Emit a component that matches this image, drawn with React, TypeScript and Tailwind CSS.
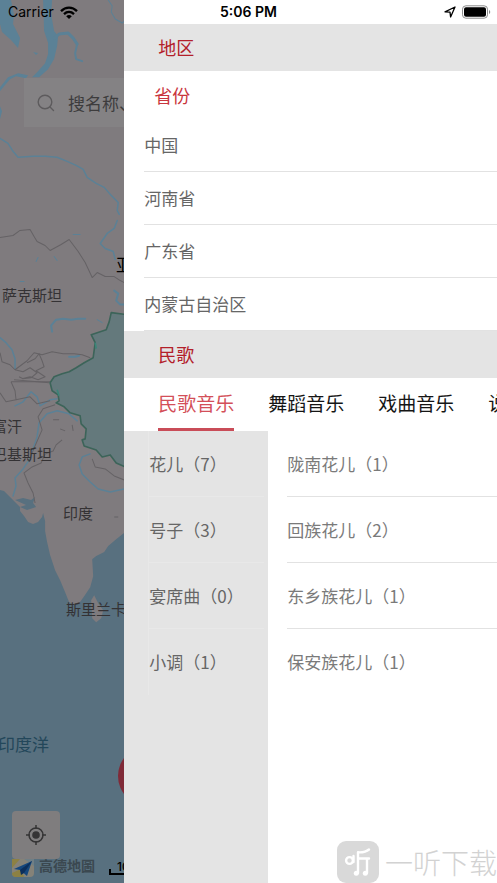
import { useState } from 'react'

const REGIONS = ['中国', '河南省', '广东省', '内蒙古自治区']

const GENRES = ['民歌音乐', '舞蹈音乐', '戏曲音乐', '说唱音乐']

const CATEGORIES = ['花儿（7）', '号子（3）', '宴席曲（0）', '小调（1）']

const SONGS = ['陇南花儿（1）', '回族花儿（2）', '东乡族花儿（1）', '保安族花儿（1）']

/** Time, signal and battery, drawn over both the map and the drawer. */
function StatusBar() {
  return (
    <header className="absolute inset-x-0 top-0 z-20 grid h-6 grid-cols-3 items-center px-1.5 font-['Inter',sans-serif] text-sm text-black">
      <span className="flex items-center gap-1.5 pl-0.5">
        Carrier
        <svg viewBox="0 0 18 13" className="h-[13px] w-[18px]" aria-hidden="true">
          <g fill="none" stroke="#000" strokeWidth="2.3">
            <path d="M1 5.1C5.6.5 12.4.5 17 5.1" />
            <path d="M4 8.1c3-2.8 7-2.8 10 0" />
          </g>
          <path d="M6.2 10.2c1.7-1.5 3.9-1.5 5.6 0L9 13Z" />
        </svg>
      </span>
      <span className="text-center font-semibold">5:06 PM</span>
      <span className="flex items-center justify-end gap-1.5">
        <svg viewBox="0 0 12 12" className="size-3" aria-hidden="true">
          <path d="M1 5.8 11 1 6.6 11 6 6.2Z" fill="none" stroke="#000" strokeWidth="1.3" strokeLinejoin="round" />
        </svg>
        <svg viewBox="0 0 29 14" className="h-3.5 w-[29px]" aria-hidden="true">
          <rect x=".5" y=".8" width="25" height="12.4" rx="3.4" fill="none" stroke="#8c8c8c" />
          <rect x="2" y="2.3" width="22" height="9.4" rx="2" />
          <path d="M27 5c1.7.7 1.7 3.3 0 4Z" fill="#8c8c8c" />
        </svg>
      </span>
    </header>
  )
}

function MapTerrain() {
  return (
    <svg
      viewBox="0 0 124 883"
      preserveAspectRatio="xMinYMin slice"
      className="absolute inset-0 size-full"
      aria-hidden="true"
    >
      <rect width="124" height="883" fill="#7f7b7e" />

      {/* Ocean */}
      <path
        fill="#58707f"
        d="M0 489 4 490 10 496 15 501 20 506 20 510 24 515 28 521 33 523 38 521 42 516 43 512 45 520 45 530 47 541 50 554 55 569 60 579 65 591 69 601 73 603 79 602 84 595 90 586 93 575 92 558 96 555 104 551 108 545 115 539 125 531V883H0Z"
      />
      <path fill="#7f7b7e" d="M91 599 94 594 98 602 103 609 101 617 96 621 92 617Z" />
      <path fill="#58707f" d="m15 499 8-2 8 2 4-3-2 6 3 4-9 3-7-3 6-2Z" />

      {/* Northern inlets and rivers */}
      <g fill="#5b8196">
        <path d="M0 0h11l3 15-1 9 7 14-2 10-7-8-9-8-2-8Z" />
        <path d="M43 0h9l-1 14 3 17 4 5-1 10-3 13-6 10-9 8-7 0 5-5 8-9 3-9 0-11-4-12Z" />
        <path d="M0 87 8 77 18 73 28 75 26 78 16 76 10 79 4 86 0 91ZM33 52l5 1-2 2ZM0 106l2 5-2 8Z" />
      </g>
      <g fill="none" stroke="#5b8196" strokeLinejoin="round" strokeLinecap="round">
        <path strokeWidth="3" d="m54 38 5-4 9-1 5 5 4 6" />
        <path strokeWidth="2" d="m77 44-2 9 1 6 6 2" />
        <path strokeWidth="1" d="m108 0 4 6-1 6 4 7 7 4 2-2" />
        <path
          strokeWidth="1.5"
          d="m0 138 8 5 5 8 5 6 15-1 12 0 12 1 10 4 9 4 7 4 4 8 9 6 8 4 7 8 7 7-1 8 2 4"
        />
        <path strokeWidth="1.5" d="m117 220-3 8-7 5-7 10 5 5 8 3 2 8" />
        <path strokeWidth="1.5" d="m0 337 6 5 6 7 3 9 0 10" />
        <path strokeWidth="2" d="m52 331-1-6 5-6 7-1 8 1 7-1 7 0M114 290l4 3-2 7 4 4 4 0M69 356l6 0 4-1" />
        <path strokeWidth="1" d="m73 234 7 0M38 257l-2 4M54 256l3 4M20 281l4 0M97 319l5 3" />
        <path strokeWidth="1.5" d="m13 495 3-10-1-8 8-9 7-10 3-10 4-12 2-14 8-9 10-3 12 3 8 7" />
        <path strokeWidth="1.5" d="m90 453-8 3-3 8 3 9 8 8 8 7 12 3 14-3" />
        <path strokeWidth="1.5" d="m15 405 8-4 8-10 6 5 3 9 10-6 7-1" />
      </g>

      {/* Borders */}
      <g fill="none" stroke="#656265" strokeWidth="1" strokeLinejoin="round">
        <path d="m0 237 13-2 7-5 10-1 4 7 3 5 8 4 5 5 11-6 8-5 9 12 7 11 7 15 5-5 8 4 9 0 6 4 4 2" />
        <path d="m15 369 12-9 7-8 8 2 10-3 11 2 11 0 8 1 8 3" />
        <path d="m15 369 8 2 7-4 7 5-6 5-8 1-4-2m8-14 8-4 4-5 3 7 2 6-8 4 9 6-7 3-8-3-8 2m-8 1 35 3" />
        <path d="m11 381 39 0M11 381l4 9 1 9-10 2-6-9M16 399l14-3 7 7 13-3M0 352l2 9 8 3 5 5" />
        <path d="m55 404-12 4-5 8 4 13-7 16-5 12M62 439l-6 5-3 6-8 3-4 9-9 4-8 6 4 10 5 10 2 10" />
        <path d="m92 458 3 8 10 2 9 7 10 4" />
        <path d="m53 419 6 0M60 428l5 2M72 424l1 6M114 516l4 0" />
      </g>

      {/* China */}
      <path
        fill="#64797c"
        stroke="#3c6459"
        strokeWidth="1.6"
        strokeLinejoin="round"
        d="M127 314 111 312 109 321 106 329 91 334 95 342 93 357 84 362 76 367 69 371 62 373 54 376 50 382 52 390 58 394 59 400 56 402 64 406 70 412 80 415 81 423 86 428 85 438 82 439 84 445 96 449 102 456 110 454 116 462 127 467Z"
      />
      <path fill="none" stroke="#3a8578" strokeWidth="1.6" d="m95 342 1 6M57 389l2 6" />
    </svg>
  )
}

/** The map screen, dimmed while the filter drawer is open. */
function MapPane() {
  return (
    <section
      aria-label="地图"
      className="relative flex w-1/4 shrink-0 flex-col justify-between overflow-hidden whitespace-nowrap pt-[78px]"
    >
      <MapTerrain />
      <span className="absolute left-0.5 top-[285px] text-[15px] leading-5 text-[#343234]">萨克斯坦</span>
      <span className="absolute left-[116px] top-[252px] text-lg leading-6 text-black">亚洲</span>
      <span className="absolute -left-2 top-[416px] text-[15px] leading-5 text-[#343234]">富汗</span>
      <span className="absolute -left-2 top-[444px] text-[15px] leading-5 text-[#343234]">巴基斯坦</span>
      <span className="absolute left-[63px] top-[503px] text-[15px] leading-5 text-[#343234]">印度</span>
      <span className="absolute left-[66px] top-[599px] text-[15px] leading-5 text-[#343234]">斯里兰卡</span>
      <span className="absolute -left-0.5 top-[732px] text-[17px] leading-6 text-[#23475a]">印度洋</span>

      <label className="relative ml-6 flex h-[49px] w-80 items-center gap-3 bg-[#848284] pl-3">
        <svg viewBox="0 0 20 20" className="size-5 shrink-0" aria-hidden="true">
          <g fill="none" stroke="#5d5b5d" strokeWidth="1.4" strokeLinecap="round">
            <circle cx="9" cy="9" r="6.8" />
            <path d="m14 14 3.5 3.5" />
          </g>
        </svg>
        <input
          type="search"
          aria-label="搜索"
          placeholder="搜名称、地区"
          className="min-w-0 flex-1 bg-transparent text-[17px] text-[#3d3c3d] outline-none placeholder:text-[#3d3c3d]"
        />
      </label>

      <button
        type="button"
        aria-label="新增"
        className="absolute bottom-[77px] left-[118px] size-[60px] rounded-full bg-[#802a38]"
      />

      <div className="relative pb-1.5 pl-3">
        <button
          type="button"
          aria-label="定位"
          className="flex size-12 items-center justify-center rounded bg-[#7f7d7e]"
        >
          <svg viewBox="0 0 20 20" className="size-5" aria-hidden="true">
            <g fill="none" stroke="#353435" strokeWidth="1.5">
              <circle cx="10" cy="10" r="7" />
              <path d="M10 0v4M10 16v4M0 10h4M16 10h4" />
            </g>
            <circle cx="10" cy="10" r="3.8" fill="#353435" />
          </svg>
        </button>
        <div className="flex h-[18px] items-start gap-1">
          <svg viewBox="0 0 23 18" className="h-[18px] w-[23px] shrink-0" aria-hidden="true">
            <rect width="22" height="18" rx="4" fill="#858278" />
            <path d="M0 0h8L0 9ZM0 14l9-4 3 8H4Q0 18 0 14Z" fill="#8d8143" />
            <path d="M12 0h10v7Z" fill="#6f7f86" />
            <path d="M20 2 2 10l6 1 7 6Z" fill="#15477d" />
            <path d="M20 2 8 11l1 5 3-2Z" fill="#0c2f5c" />
          </svg>
          <span className="text-sm font-bold leading-3 text-[#3b4850]">高德地圖</span>
          <span className="relative ml-2.5 w-16 shrink-0 pl-2 font-['Inter',sans-serif] text-xs font-medium leading-4 text-black after:absolute after:inset-x-0 after:bottom-0 after:h-1.5 after:border-b-2 after:border-l-2 after:border-black">
            1000公里
          </span>
        </div>
      </div>
    </section>
  )
}

function FilterDrawer() {
  const [genre, setGenre] = useState(GENRES[0])

  return (
    <aside aria-label="筛选" className="relative flex min-w-0 flex-1 flex-col bg-white pt-6">
      <h2 className="flex h-[47px] shrink-0 items-center bg-[#e4e4e4] pb-0.5 pl-[34px] text-lg text-[#b3202a]">
        地区
      </h2>
      <h3 className="flex h-12 shrink-0 items-center pl-[30px] text-lg text-[#c9353d]">省份</h3>
      <ul className="pl-5">
        {REGIONS.map((region) => (
          <li key={region} className="border-b border-[#e2e2e2]">
            <button type="button" className="block h-[52px] w-full text-left text-[17px] text-[#666]">
              {region}
            </button>
          </li>
        ))}
      </ul>

      <h2 className="flex h-[47px] shrink-0 items-center bg-[#e4e4e4] pb-0.5 pl-[34px] text-lg text-[#b3202a]">
        民歌
      </h2>
      <div role="tablist" className="flex h-[53px] shrink-0 gap-[34px] overflow-hidden pl-[34px] text-[19px]">
        {GENRES.map((name) => (
          <button
            key={name}
            type="button"
            role="tab"
            aria-selected={name === genre}
            onClick={() => setGenre(name)}
            className={
              name === genre
                ? 'shrink-0 border-b-[3px] border-[#c94c58] text-[#d34f59]'
                : 'shrink-0 border-b-[3px] border-transparent text-[#151515]'
            }
          >
            {name}
          </button>
        ))}
      </div>

      <div className="flex flex-1">
        <div className="w-36 shrink-0 bg-[#e4e4e4] pl-6 pr-1">
          <ul className="border-l border-[#e8e8e8]">
            {CATEGORIES.map((category) => (
              <li key={category} className="border-b border-[#e8e8e8] last:border-transparent">
                <button type="button" className="block h-[65px] w-full text-left text-[17px] text-[#666]">
                  {category}
                </button>
              </li>
            ))}
          </ul>
        </div>
        <ul className="min-w-0 flex-1 pl-[19px]">
          {SONGS.map((song) => (
            <li key={song} className="border-b border-[#e2e2e2] last:border-transparent">
              <button type="button" className="block h-[65px] w-full text-left text-[17px] text-[#7a7a7a]">
                {song}
              </button>
            </li>
          ))}
        </ul>
      </div>
    </aside>
  )
}

function Watermark() {
  return (
    <div className="pointer-events-none absolute bottom-0 right-0 z-10 flex items-center gap-1.5 text-[28px] font-light leading-[42px] text-[#d2d2d2]">
      <svg viewBox="0 0 42 42" className="size-[42px]" aria-hidden="true">
        <rect width="42" height="42" rx="9" fill="#d9d9d9" />
        <g fill="none" stroke="#fff" strokeWidth="2.4" strokeLinecap="round" strokeLinejoin="round">
          <circle cx="12.5" cy="19.5" r="3.4" />
          <path d="M16.5 15v6" />
          <path d="M32 8.5c-3 2.600-7 3-11 2.800V32M21 17.500h11M30 17.500V32" />
        </g>
        <circle cx="19.300" cy="32.200" r="2.500" fill="#fff" />
        <circle cx="28.300" cy="32.200" r="2.500" fill="#fff" />
      </svg>
      一听下载
    </div>
  )
}

export default function App() {
  return (
    <main className="relative flex min-h-screen overflow-hidden bg-white font-['Noto_Sans_CJK_SC',sans-serif]">
      <StatusBar />
      <MapPane />
      <FilterDrawer />
      <Watermark />
    </main>
  )
}
